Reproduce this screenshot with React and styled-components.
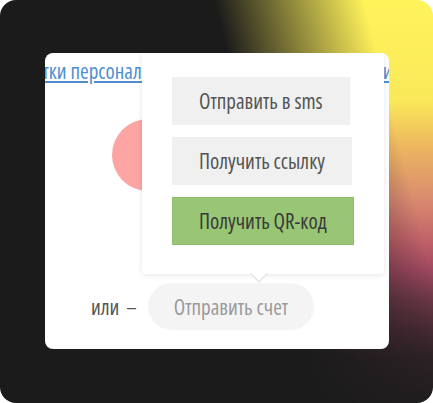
import styled, {createGlobalStyle} from "styled-components"

const GlobalStyle = createGlobalStyle`
    html, body {
        margin: 0;
        background: #ffffff;
    }
`

const Frame = styled.div`
    width: 433px;
    height: 403px;
    box-sizing: border-box;
    padding: 53px 44px 54px 45px;
    border-radius: 16px;
    overflow: hidden;
    background:
        linear-gradient(76deg, #1b1b1b 59%, rgba(27, 27, 27, 0) 87%),
        linear-gradient(to bottom, #fff35a 0%, #fae85a 25%, #ecb460 37%, #d88870 50%, #c06068 60%, #a04860 67%, #703848 74%, #4a2a34 82%, #2e2226 89%, #221e20 100%);
`

const Card = styled.div`
    position: relative;
    height: 100%;
    background: #ffffff;
    border-radius: 8px;
    overflow: hidden;
    font-family: "Open Sans", "Liberation Sans", sans-serif;
    font-stretch: 75%;
`

const LinkLine = styled.div`
    white-space: nowrap;
    overflow: hidden;
    padding-top: 5px;
    font-size: 21px;
    line-height: 26px;
    text-indent: -58px;
`

const Link = styled.a`
    color: #4f8fd0;
    text-decoration: underline;
`

const Body = styled.div`
    display: flex;
    align-items: center;
    padding: 35px 0 0 67px;
`

const Circle = styled.div`
    width: 72px;
    height: 72px;
    border-radius: 50%;
    background: #fca5a4;
`

const Footer = styled.div`
    display: flex;
    align-items: center;
    gap: 11px;
    padding: 92px 0 0 46px;
`

const Or = styled.span`
    font-size: 21px;
    color: #555555;
    word-spacing: 3px;
`

const Pill = styled.button`
    height: 47px;
    padding: 0 26px;
    border: none;
    border-radius: 24px;
    background: #f4f4f4;
    color: #9a9a9a;
    font-family: inherit;
    font-stretch: inherit;
    font-size: 21px;
`

const Popover = styled.div`
    position: absolute;
    top: 0;
    left: 97px;
    width: 242px;
    height: 221px;
    box-sizing: border-box;
    padding: 24px 0 0 30px;
    display: flex;
    flex-direction: column;
    align-items: flex-start;
    gap: 12px;
    background: #ffffff;
    border-radius: 0 0 4px 4px;
    box-shadow: 0 1px 6px rgba(0, 0, 0, 0.1);

    &::after {
        content: "";
        position: absolute;
        left: 111px;
        bottom: -6px;
        width: 11px;
        height: 11px;
        background: #ffffff;
        border-right: 1px solid #dddddd;
        border-bottom: 1px solid #dddddd;
        transform: rotate(45deg);
    }
`

const Option = styled.button`
    height: 48px;
    padding: 0 26px;
    box-sizing: border-box;
    border: 1px solid ${({$primary}) => ($primary ? "#8cbd6c" : "#f0f0f0")};
    background: ${({$primary}) => ($primary ? "#98c674" : "#f0f0f0")};
    color: ${({$primary}) => ($primary ? "#3a3a3a" : "#555555")};
    font-family: inherit;
    font-stretch: inherit;
    font-size: 21px;
`

const App = () => (
    <>
        <GlobalStyle />
        <Frame>
            <Card>
                <LinkLine>
                    <Link>обработки персональных данных и «Политики конфиденциальности»</Link>
                </LinkLine>
                <Body>
                    <Circle />
                </Body>
                <Footer>
                    <Or>или –</Or>
                    <Pill>Отправить счет</Pill>
                </Footer>
                <Popover>
                    <Option>Отправить в sms</Option>
                    <Option>Получить ссылку</Option>
                    <Option $primary>Получить QR-код</Option>
                </Popover>
            </Card>
        </Frame>
    </>
)

export default App
